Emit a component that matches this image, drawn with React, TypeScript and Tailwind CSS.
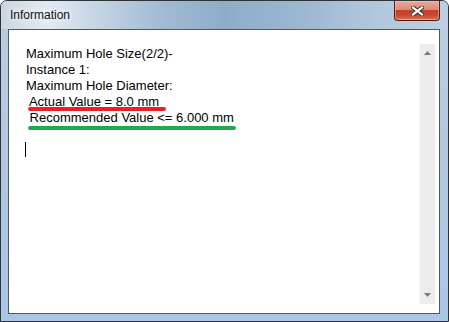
import React from 'react';

const lines = [
  'Maximum Hole Size(2/2)-',
  'Instance 1:',
  'Maximum Hole Diameter:',
  ' Actual Value = 8.0 mm',
  ' Recommended Value <= 6.000 mm',
];

const CloseButton: React.FC = () => (
  <div className="relative w-[46px] h-[20px] rounded-b-[4px] border border-t-0 border-[#4a1d15] overflow-hidden bg-[linear-gradient(180deg,#e9ab9a_0%,#dc8a74_45%,#c4402a_50%,#c8472f_75%,#dc7356_100%)] shadow-[inset_0_0_0_1px_rgba(255,210,200,0.45)] flex items-center justify-center">
    <svg width="13" height="10" viewBox="0 0 13 10">
      <path d="M2 1.5 L11 8.5 M11 1.5 L2 8.5" stroke="#3a3a3a" strokeWidth="4.2" strokeLinecap="square" />
      <path d="M2 1.5 L11 8.5 M11 1.5 L2 8.5" stroke="#ffffff" strokeWidth="2.2" strokeLinecap="square" />
    </svg>
  </div>
);

const Scrollbar: React.FC = () => (
  <div className="w-[17px] h-full bg-[#ececec] border-x border-[#f6f6f6] flex flex-col items-center justify-between py-[7px]">
    <svg width="7" height="4" viewBox="0 0 7 4">
      <path d="M0 4 L3.5 0 L7 4 Z" fill="#7a7a7a" />
    </svg>
    <svg width="7" height="4" viewBox="0 0 7 4">
      <path d="M0 0 L7 0 L3.5 4 Z" fill="#7a7a7a" />
    </svg>
  </div>
);

export default function App() {
  return (
    <div className="w-[449px] h-[322px] border border-[#2e3338] rounded-t-[7px] bg-[linear-gradient(180deg,#bccde0_0%,#b2c8df_50%,#a8c6e6_100%)] flex flex-col overflow-hidden">
      <div className="h-[28px] shrink-0 flex justify-between bg-[linear-gradient(90deg,#ccd6e0_0%,#e2eaf2_10%,#c9d7e5_20%,#a4bcd5_35%,#8eacca_50%,#9ab5d0_65%,#b3c8dd_85%,#bdd0e3_100%)]">
        <div className="pl-[9px] pt-[7px] text-[12px] leading-[15px] text-[#111] font-['Liberation_Sans',Arial,sans-serif] [text-shadow:0_0_6px_#ffffff,0_0_10px_#ffffff]">
          Information
        </div>
        <div className="mr-[8px]">
          <CloseButton />
        </div>
      </div>
      <div className="flex-1 flex ml-[7px] mr-[8px] mb-[7px]">
        <div className="flex-1 border border-[#4c5a68] bg-white pt-[14px] pr-[3px] pb-[9px] pl-[13px] flex">
          <div className="flex-1 flex h-full">
            <div className="relative flex-1 pl-[4px] pt-[2px] text-[13px] leading-[16px] text-black font-['Liberation_Sans',Arial,sans-serif] whitespace-pre">
              {lines.map((l, i) => (
                <div key={i}>{l}</div>
              ))}
              <span className="absolute left-[3px] top-[98px] w-[1px] h-[15px] bg-black" />
              <span className="absolute left-[6px] top-[63px] w-[138px] h-[4px] rounded-full bg-[#e8202a]" />
              <span className="absolute left-[6px] top-[82px] w-[208px] h-[4px] rounded-full bg-[#20a84b]" />
            </div>
            <Scrollbar />
          </div>
        </div>
      </div>
    </div>
  );
}
